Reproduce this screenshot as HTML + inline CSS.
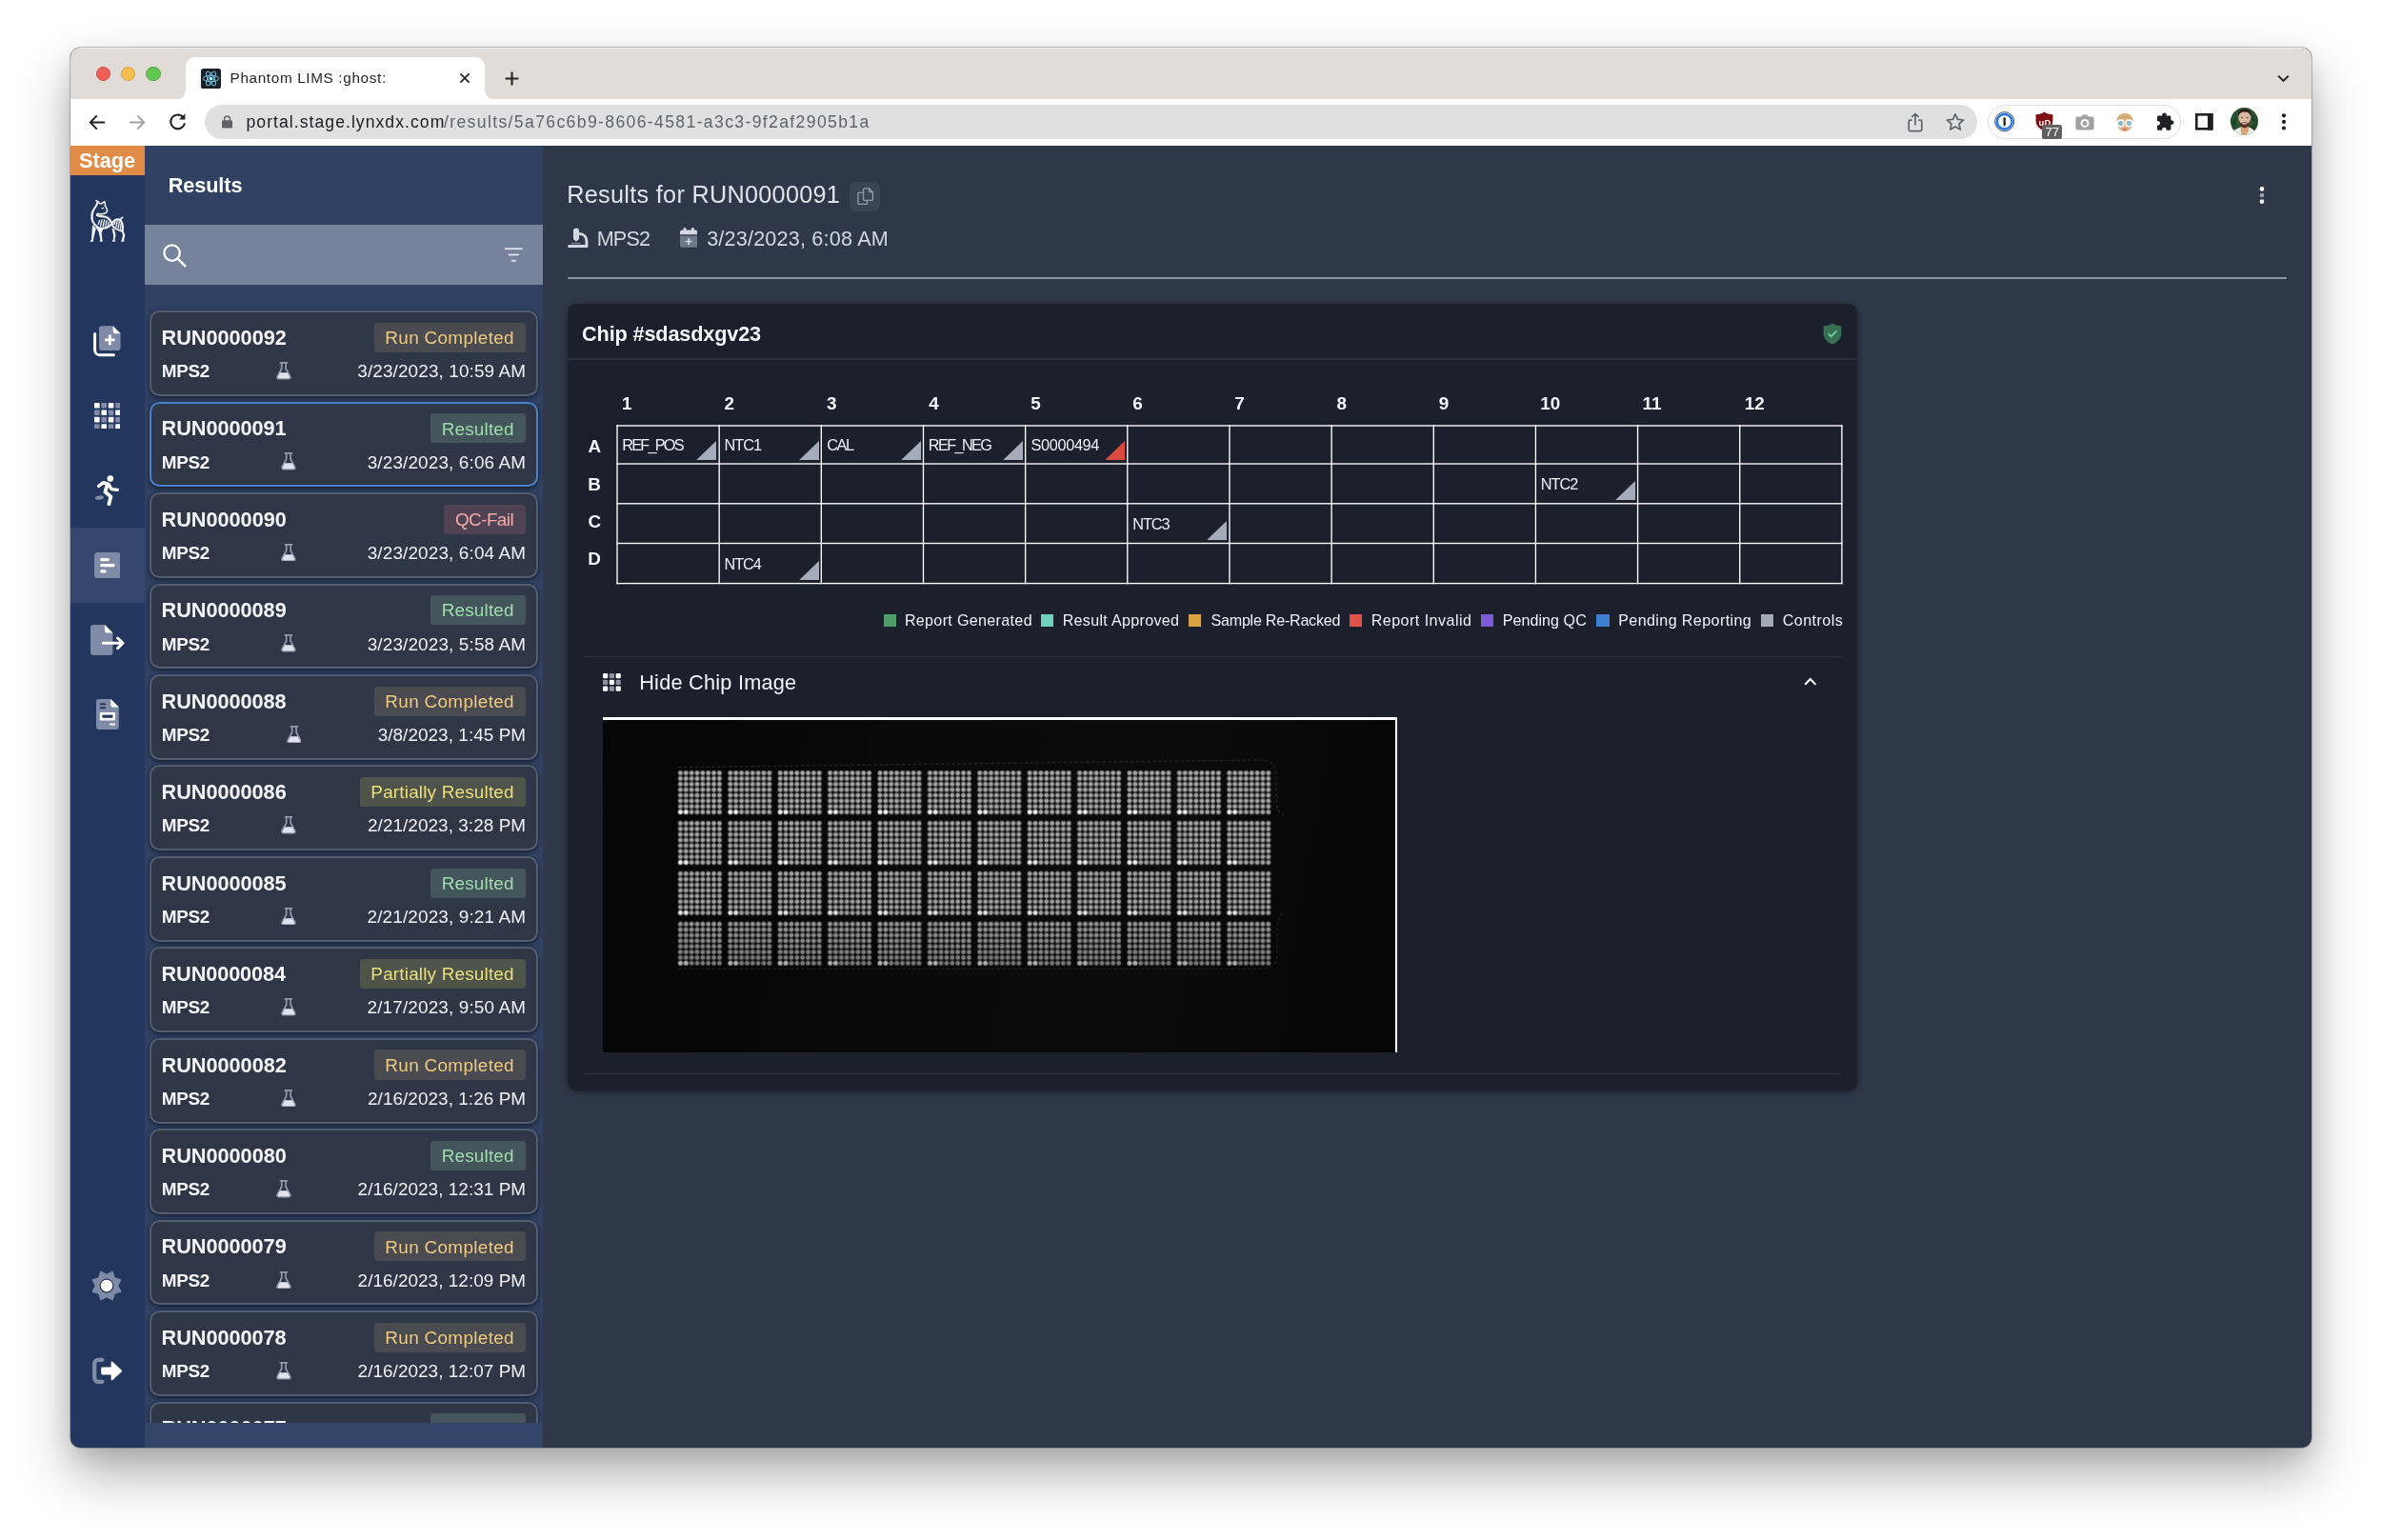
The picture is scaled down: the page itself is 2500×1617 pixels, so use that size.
<!DOCTYPE html>
<html lang="en"><head><meta charset="utf-8"><title>Phantom LIMS :ghost:</title>
<style>
html,body{margin:0;padding:0;background:#fff;}
body{width:2500px;height:1617px;position:relative;overflow:hidden;font-family:"Liberation Sans",sans-serif;}
.b{position:absolute;box-sizing:border-box;display:block;}
.t{position:absolute;white-space:nowrap;}
#win{position:absolute;left:74px;top:50px;width:2353px;height:1470.4px;border-radius:10.5px;overflow:hidden;background:#2f3848;}
#shadow{position:absolute;left:74px;top:50px;width:2353px;height:1470.4px;border-radius:10.5px;box-shadow:0 0 0 0.7px rgba(0,0,0,.32),0 27px 56px rgba(0,0,0,.32),0 8px 22px rgba(0,0,0,.09);}
#in{position:absolute;left:-74px;top:-50px;width:2500px;height:1617px;}
#in{will-change:transform;}
#clip{position:absolute;left:152px;top:300px;width:418px;height:1193.5px;overflow:hidden;}
#clipin{position:absolute;left:-152px;top:-300px;width:2500px;height:1617px;}
</style></head><body>
<div id="shadow"></div>
<div id="win"><div id="in">
<div class="b" style="left:73.00px;top:49.00px;width:2354.00px;height:55.20px;background:#e2dcd8;"></div>
<div class="b" style="left:74.00px;top:50.00px;width:2353.00px;height:1.20px;background:rgba(255,255,255,.55);"></div>
<div class="b" style="left:73.00px;top:104.20px;width:2354.00px;height:48.60px;background:#ffffff;"></div>
<div class="b" style="left:100.60px;top:69.70px;width:15.60px;height:15.60px;background:#ee5f57;border-radius:50%;border:0.6px solid #d24a42;"></div>
<div class="b" style="left:126.90px;top:69.70px;width:15.60px;height:15.60px;background:#f6be4f;border-radius:50%;border:0.6px solid #d8a03a;"></div>
<div class="b" style="left:153.00px;top:69.70px;width:15.60px;height:15.60px;background:#62c554;border-radius:50%;border:0.6px solid #4ea73e;"></div>
<svg class="b" style="left:183.00px;top:60.00px;" width="338.00" height="45.00" viewBox="0 0 338 45"><path d="M0 45 C7 45 12 41 12 33 V11 C12 4 16 0 23 0 H315 C322 0 326 4 326 11 V33 C326 41 331 45 338 45 Z" fill="#fff"/></svg>
<svg class="b" style="left:210.70px;top:71.70px;" width="21.00" height="21.00" viewBox="0 0 21 21"><rect width="21" height="21" rx="2.6" fill="#1d2027"/><g fill="none" stroke="#7ccbe8" stroke-width="0.95"><ellipse cx="10.5" cy="10.5" rx="8.3" ry="3.2"/><ellipse cx="10.5" cy="10.5" rx="8.3" ry="3.2" transform="rotate(60 10.5 10.5)"/><ellipse cx="10.5" cy="10.5" rx="8.3" ry="3.2" transform="rotate(120 10.5 10.5)"/></g><circle cx="10.5" cy="10.5" r="1.9" fill="#9eeeff"/></svg>
<div class="t" style="left:241.54px;top:74.25px;font-size:15.3px;line-height:15.3px;color:#1f2023;letter-spacing:0.646px;">Phantom LIMS :ghost:</div>
<svg class="b" style="left:481.90px;top:76.40px;" width="12.00" height="12.00" viewBox="0 0 12 12"><path d="M1.4 1.4 L10.6 10.6 M10.6 1.4 L1.4 10.6" stroke="#202124" stroke-width="1.7" fill="none"/></svg>
<svg class="b" style="left:529.70px;top:74.90px;" width="15.00" height="15.00" viewBox="0 0 15 15"><path d="M7.5 0.6 V14.4 M0.6 7.5 H14.4" stroke="#202124" stroke-width="2.1" fill="none"/></svg>
<svg class="b" style="left:2391.30px;top:78.40px;" width="13.00" height="9.00" viewBox="0 0 13 9"><path d="M1.2 1.6 L6.5 6.9 L11.8 1.6" stroke="#202124" stroke-width="2" fill="none"/></svg>
<svg class="b" style="left:93.00px;top:119.50px;" width="18.00" height="17.00" viewBox="0 0 18 17"><path d="M17 8.5 H2.2 M8.8 1.4 L1.8 8.5 L8.8 15.6" stroke="#1f2023" stroke-width="1.9" fill="none" stroke-linejoin="miter"/></svg>
<svg class="b" style="left:134.50px;top:119.50px;" width="18.00" height="17.00" viewBox="0 0 18 17"><path d="M1 8.5 H15.8 M9.2 1.4 L16.2 8.5 L9.2 15.6" stroke="#a3a3a3" stroke-width="1.9" fill="none"/></svg>
<svg class="b" style="left:176.50px;top:118.00px;" width="19.00" height="20.00" viewBox="0 0 19 20"><path d="M15.6 5.4 A7.4 7.4 0 1 0 16.9 11.4" stroke="#1f2023" stroke-width="2" fill="none"/><path d="M17.4 1.2 V7.6 H11 Z" fill="#1f2023"/></svg>
<div class="b" style="left:214.50px;top:110.10px;width:1861.40px;height:35.70px;background:#e0e0e0;border-radius:18px;"></div>
<svg class="b" style="left:232.60px;top:121.40px;" width="11.00" height="13.60" viewBox="0 0 11 13.6"><rect x="0" y="5.2" width="11" height="8.4" rx="1.4" fill="#5f6368"/><path d="M2.6 5.6 V3.9 a2.9 2.9 0 0 1 5.8 0 V5.6" stroke="#5f6368" stroke-width="1.5" fill="none"/></svg>
<div class="t" style="left:258.47px;top:120.40px;font-size:17.6px;line-height:17.6px;color:#202124;letter-spacing:1.046px;">portal.stage.lynxdx.com</div>
<div class="t" style="left:466.00px;top:120.40px;font-size:17.6px;line-height:17.6px;color:#606368;letter-spacing:1.361px;">/results/5a76c6b9-8606-4581-a3c3-9f2af2905b1a</div>
<svg class="b" style="left:2003.00px;top:117.50px;" width="16.00" height="21.00" viewBox="0 0 16 21"><path d="M4.6 8.2 H2.8 a1.6 1.6 0 0 0 -1.6 1.6 V18 a1.6 1.6 0 0 0 1.6 1.6 H13.2 a1.6 1.6 0 0 0 1.6 -1.6 V9.8 a1.6 1.6 0 0 0 -1.6 -1.6 H11.4" stroke="#5f6368" stroke-width="1.7" fill="none"/><path d="M8 13.4 V1.6 M4.3 5 L8 1.4 L11.7 5" stroke="#5f6368" stroke-width="1.7" fill="none"/></svg>
<svg class="b" style="left:2042.80px;top:117.60px;" width="20.00" height="20.00" viewBox="0 0 20 20"><path d="M10 1.8 L12.5 7.4 L18.6 8 L14 12.1 L15.3 18.1 L10 15 L4.7 18.1 L6 12.1 L1.4 8 L7.5 7.4 Z" stroke="#5f6368" stroke-width="1.7" fill="none" stroke-linejoin="round"/></svg>
<div class="b" style="left:2087.00px;top:110.10px;width:203.30px;height:35.70px;background:#fff;border-radius:18px;border:1px solid #dadce0;"></div>
<svg class="b" style="left:2094.20px;top:117.40px;" width="21.40" height="21.40" viewBox="0 0 21.4 21.4"><circle cx="10.7" cy="10.7" r="10.1" fill="#fff" stroke="#3b3d42" stroke-width="0.9"/><circle cx="10.7" cy="10.7" r="7.9" fill="#fff" stroke="#2b7be6" stroke-width="2.7"/><rect x="9.6" y="6.2" width="2.2" height="9" rx="1" fill="#17181a"/></svg>
<svg class="b" style="left:2137.40px;top:117.20px;" width="19.00" height="21.00" viewBox="0 0 19 21"><path d="M9.5 0.6 C12 2.6 15 3.2 18.4 3.2 V9.5 C18.4 15 14.6 18.6 9.5 20.4 C4.4 18.6 0.6 15 0.6 9.5 V3.2 C4 3.2 7 2.6 9.5 0.6 Z" fill="#800f12"/></svg>
<div class="t" style="left:2140.61px;top:123.96px;font-size:9.5px;line-height:9.5px;color:#fff;font-weight:700;">uD</div>
<div class="b" style="left:2144.40px;top:130.70px;width:20.80px;height:15.10px;background:#616161;border-radius:2.6px;"></div>
<div class="t" style="left:2147.45px;top:131.83px;font-size:13.2px;line-height:13.2px;color:#fff;">77</div>
<svg class="b" style="left:2178.80px;top:119.60px;" width="20.00" height="17.00" viewBox="0 0 20 17"><path d="M6.4 2.4 L7.6 0.4 H12.4 L13.6 2.4 H17.8 a1.8 1.8 0 0 1 1.8 1.8 V14.8 a1.8 1.8 0 0 1 -1.8 1.8 H2.2 a1.8 1.8 0 0 1 -1.8 -1.8 V4.2 a1.8 1.8 0 0 1 1.8 -1.8 Z" fill="#a2a2a2"/><circle cx="10" cy="9.4" r="4.4" fill="#fff"/><circle cx="10" cy="9.4" r="2.5" fill="#a2a2a2"/></svg>
<svg class="b" style="left:2219.80px;top:117.60px;" width="22.00" height="22.00" viewBox="0 0 22 22"><ellipse cx="11" cy="8.2" rx="8.6" ry="7.4" fill="#d8b27a"/><ellipse cx="11" cy="12.4" rx="7.6" ry="8" fill="#e3b08c"/><path d="M3 8 C5 2.6 17 2.6 19 8 C15 5.8 7 5.8 3 8Z" fill="#cfa666"/><circle cx="6.6" cy="11.4" r="3.3" fill="#8dbccb" stroke="#fff" stroke-width="1.5"/><circle cx="15.4" cy="11.4" r="3.3" fill="#8dbccb" stroke="#fff" stroke-width="1.5"/><path d="M8.6 17.4 Q11 18.8 13.4 17.4" stroke="#a5564a" stroke-width="1" fill="none"/></svg>
<svg class="b" style="left:2262.60px;top:118.00px;" width="20.00" height="20.00" viewBox="0 0 20 20"><path d="M7.2 3.6 a2.4 2.4 0 1 1 4.6 0 H15 a1.4 1.4 0 0 1 1.4 1.4 V8.4 a2.4 2.4 0 1 1 0 4.6 V17.4 a1.4 1.4 0 0 1 -1.4 1.4 H11.6 a2.3 2.3 0 1 0 -4.4 0 H3.4 A1.4 1.4 0 0 1 2 17.4 V13.6 a2.3 2.3 0 1 0 0 -4.4 V5 a1.4 1.4 0 0 1 1.4 -1.4 Z" fill="#202124"/></svg>
<svg class="b" style="left:2305.00px;top:119.20px;" width="18.60" height="17.60" viewBox="0 0 18.6 17.6"><rect x="1.3" y="1.3" width="16" height="15" fill="#fff" stroke="#1f2023" stroke-width="2.6"/><rect x="13" y="0" width="5.6" height="17.6" fill="#1f2023"/></svg>
<svg class="b" style="left:2341.70px;top:113.20px;" width="29.00" height="29.00" viewBox="0 0 29 29"><defs><clipPath id="avc"><circle cx="14.5" cy="14.5" r="14.5"/></clipPath><radialGradient id="avg" cx="0.5" cy="0.45" r="0.6"><stop offset="0" stop-color="#3a6b40"/><stop offset="1" stop-color="#1e4226"/></radialGradient></defs><g clip-path="url(#avc)"><rect width="29" height="29" fill="url(#avg)"/><path d="M2 16 L7 9 L5 20 Z M24 7 L27 15 L22 13 Z M20 20 L26 24 L25 17 Z" fill="#173a20" opacity=".7"/><path d="M3.5 24 C7 21.5 10 20.6 11.5 20.4 L15 27 L18.6 20.4 C21 21 23.6 22.4 25.6 24.6 L24 30 H5 Z" fill="#ecebe7"/><path d="M11.2 19.5 L18.4 19.5 L19.4 24 L15.6 30 L12 30 L10.4 23 Z" fill="#d7a47c"/><ellipse cx="14.8" cy="10.6" rx="6.5" ry="7.6" fill="#dcb8a0"/><path d="M8 9.6 C7.6 4.4 10.6 1.6 14.8 1.6 C19.4 1.6 22 4.6 21.4 9.4 C20.6 6.4 18.6 4.6 14.8 4.6 C11 4.6 8.8 6.4 8 9.6 Z" fill="#2b1c15"/><path d="M8.6 12.6 C9.2 15.4 10 16.6 11.4 16 C13.4 15 16.2 15 18.2 16 C19.6 16.6 20.4 15.2 20.9 12.6 C21.2 17.4 18.6 21.4 14.8 21.4 C11 21.4 8.4 17.4 8.6 12.6 Z" fill="#5a3526"/><path d="M12.2 16.4 Q14.8 18.2 17.4 16.4 Q14.8 17.2 12.2 16.4 Z" fill="#f4f0ea" stroke="#f4f0ea" stroke-width=".5"/><path d="M11 10.4 H13 M16.6 10.4 H18.6" stroke="#4a3428" stroke-width=".9"/></g></svg>
<svg class="b" style="left:2394.00px;top:118.00px;" width="8.00" height="20.00" viewBox="0 0 8 20"><circle cx="4" cy="3.3" r="2.1" fill="#202124"/><circle cx="4" cy="9.9" r="2.1" fill="#202124"/><circle cx="4" cy="16.5" r="2.1" fill="#202124"/></svg>
<div class="b" style="left:73.00px;top:152.70px;width:79.00px;height:1368.00px;background:#23365d;"></div>
<div class="b" style="left:152.00px;top:152.70px;width:418.00px;height:1368.00px;background:#304163;"></div>
<div class="b" style="left:570.00px;top:152.70px;width:1857.00px;height:1368.00px;background:#2f3848;"></div>
<div class="b" style="left:73.00px;top:152.70px;width:79.00px;height:31.30px;background:#e08b46;"></div>
<div class="t" style="left:83.07px;top:157.63px;font-size:21.7px;line-height:21.7px;color:#fff;font-weight:700;letter-spacing:-0.032px;">Stage</div>
<div class="b" style="left:73.00px;top:554.00px;width:79.00px;height:78.50px;background:#34466b;"></div>
<svg class="b" style="left:88.00px;top:204.00px;" width="50.00" height="56.00" viewBox="0 0 50 56"><g fill="none" stroke="#f1f4f9" stroke-linecap="round" stroke-linejoin="round"><path stroke-width="1.5" d="M12.8 6.5 C14.6 7 15.8 8.2 16.6 9.6 L18.2 10 L21.8 7.7 C22.4 9 22.5 10.4 22.3 11.6 C23.4 13.4 24.2 15.2 24.7 17.1 C24.2 19 22.8 20.2 20.6 20.6 C18.4 21 16.4 20.8 14.6 20.2 L13.6 21.7"/><path stroke-width="1.2" d="M19 14.9 L20.7 14.2"/><path stroke-width="2.1" d="M14.4 8.6 C14 11.4 11.6 14 10.1 16.6 C8.5 19.6 8 23 8.7 26.6 C9.5 30.2 12 33 15.5 35.2"/><path stroke-width="2.1" d="M13.8 21.8 C16.2 23.5 20 22.7 23.5 24 C27.5 25.6 29 29 30.2 32.5 C31.5 36 36 37.6 40.5 38.6"/><path stroke-width="2.1" d="M15.5 35.2 C19 36 24 35.6 27 33.4 C30 31.2 30.5 28 33.5 26.8 C36.5 25.8 39.2 27.4 40.4 31 C41.2 33.4 41.2 36 40.5 38.6"/><path stroke-width="1.7" d="M37.6 27.2 L40.6 24.3"/><path stroke-width="1.35" d="M16.5 27.4 L15.3 31.4 M19 27 L17.6 33 M21.6 27 L20.2 33.6 M24.1 27.6 L22.8 33.4 M26.3 29.2 L25.5 32.4 M32.9 28.8 L32.1 31.6 M35.1 28 L34 34.2 M37.3 28.8 L36.2 35.4 M39.3 30.6 L38.5 36"/></g><g fill="#f1f4f9"><path d="M9.1 32.2 L12.8 35.6 L10 47.4 L9.8 49.7 H6.3 L8 47.5 Z"/><path d="M12.4 34.6 L20.6 36 L18.6 40 L19.4 47.5 L19.9 49.7 H16.7 L17.3 47.5 L15.6 39.6 Z"/><path d="M29.4 35.6 L32.2 37 L33.5 43.2 L32.5 47.5 L32.9 49.7 H29.9 L30.7 47.5 L31.2 43.4 Z"/><path d="M39.4 38 L41.4 38.2 L43.3 42.8 L42.3 47.5 L42.1 49.7 H39.1 L39.9 47.5 L41 43 Z"/></g></svg>
<svg class="b" style="left:98.00px;top:341.50px;" width="29.00" height="33.00" viewBox="0 0 29 33"><path d="M9 0.3 H20.6 L28.6 8.3 V23 a3 3 0 0 1 -3 3 H9 a3 3 0 0 1 -3 -3 V3.3 a3 3 0 0 1 3 -3 Z" fill="#7f8ba7"/><path d="M20.6 0.3 L28.6 8.3 H22.6 a2 2 0 0 1 -2 -2 Z" fill="#fff"/><path d="M15.9 9.6 h2.8 v3.9 h3.9 v2.8 h-3.9 v3.9 h-2.8 v-3.9 h-3.9 v-2.8 h3.9 Z" fill="#fff"/><path d="M1.6 8.4 V25.4 a5.4 5.4 0 0 0 5.4 5.4 H21.4" stroke="#fff" stroke-width="3" fill="none" stroke-linecap="round"/></svg>
<svg class="b" style="left:98.60px;top:422.60px;" width="27.80" height="27.80" viewBox="0 0 27.8 27.8"><rect x="0.0" y="0.0" width="5.6" height="5.6" rx="0.7" fill="#fff"/><rect x="7.4" y="0.0" width="5.6" height="5.6" rx="0.7" fill="#7f8ba7"/><rect x="14.8" y="0.0" width="5.6" height="5.6" rx="0.7" fill="#fff"/><rect x="22.2" y="0.0" width="5.6" height="5.6" rx="0.7" fill="#7f8ba7"/><rect x="0.0" y="7.4" width="5.6" height="5.6" rx="0.7" fill="#7f8ba7"/><rect x="7.4" y="7.4" width="5.6" height="5.6" rx="0.7" fill="#fff"/><rect x="14.8" y="7.4" width="5.6" height="5.6" rx="0.7" fill="#7f8ba7"/><rect x="22.2" y="7.4" width="5.6" height="5.6" rx="0.7" fill="#fff"/><rect x="0.0" y="14.8" width="5.6" height="5.6" rx="0.7" fill="#fff"/><rect x="7.4" y="14.8" width="5.6" height="5.6" rx="0.7" fill="#7f8ba7"/><rect x="14.8" y="14.8" width="5.6" height="5.6" rx="0.7" fill="#fff"/><rect x="22.2" y="14.8" width="5.6" height="5.6" rx="0.7" fill="#7f8ba7"/><rect x="0.0" y="22.2" width="5.6" height="5.6" rx="0.7" fill="#7f8ba7"/><rect x="7.4" y="22.2" width="5.6" height="5.6" rx="0.7" fill="#fff"/><rect x="14.8" y="22.2" width="5.6" height="5.6" rx="0.7" fill="#7f8ba7"/><rect x="22.2" y="22.2" width="5.6" height="5.6" rx="0.7" fill="#fff"/></svg>
<svg class="b" style="left:99.00px;top:498.60px;" width="27.00" height="32.40" viewBox="0 0 27 32.4"><circle cx="16.8" cy="3.6" r="3.3" fill="#fff"/><path d="M4.6 11.4 L9.6 7.6 L15 9.4 L18 14.6 L24.4 15.4" stroke="#fff" stroke-width="3.4" fill="none" stroke-linecap="round" stroke-linejoin="round"/><path d="M13.6 9.8 L11.4 17.6 L17.4 22.4 L15.4 30.4" stroke="#fff" stroke-width="3.8" fill="none" stroke-linecap="round" stroke-linejoin="round"/><ellipse cx="5.4" cy="23.6" rx="4.6" ry="2.1" fill="#7f8ba7" transform="rotate(-8 5.4 23.6)"/></svg>
<svg class="b" style="left:98.60px;top:579.60px;" width="27.80" height="27.40" viewBox="0 0 27.8 27.4"><rect width="27.8" height="27.4" rx="4" fill="#7f8ba7"/><g stroke="#fff" stroke-width="3.3" stroke-linecap="round"><path d="M7.8 7.7 H14.2"/><path d="M7.8 13.7 H20"/><path d="M7.8 19.9 H11"/></g></svg>
<svg class="b" style="left:94.60px;top:656.00px;" width="36.00" height="32.00" viewBox="0 0 36 32"><path d="M3 0 H15 L23.4 8.4 V29 a3 3 0 0 1 -3 3 H3 a3 3 0 0 1 -3 -3 V3 a3 3 0 0 1 3 -3 Z" fill="#7f8ba7"/><path d="M15 0 L23.4 8.4 H17 a2 2 0 0 1 -2 -2 Z" fill="#fff"/><path d="M13.4 19.3 H33 M28.6 14 L34 19.3 L28.6 24.6" stroke="#fff" stroke-width="3" fill="none" stroke-linecap="round" stroke-linejoin="round"/></svg>
<svg class="b" style="left:100.60px;top:734.20px;" width="24.00" height="32.00" viewBox="0 0 24 32"><path d="M3 0 H15.4 L23.8 8.4 V29 a3 3 0 0 1 -3 3 H3 a3 3 0 0 1 -3 -3 V3 a3 3 0 0 1 3 -3 Z" fill="#7f8ba7"/><path d="M15.4 0 L23.8 8.4 H17.4 a2 2 0 0 1 -2 -2 Z" fill="#fff"/><rect x="3.8" y="4.4" width="6.2" height="1.9" fill="#23365d"/><rect x="3.8" y="8.3" width="6.2" height="1.9" fill="#23365d"/><rect x="3.8" y="14" width="16.2" height="8.4" rx="1" fill="#fff"/><rect x="6.4" y="16.6" width="11" height="3.2" fill="#23365d"/><rect x="14" y="25.6" width="6" height="1.9" fill="#fff"/></svg>
<svg class="b" style="left:95.20px;top:1333.20px;" width="34.00" height="34.00" viewBox="0 0 34 34"><polygon points="23.24,1.94 25.34,8.66 32.06,10.76 28.80,17.00 32.06,23.24 25.34,25.34 23.24,32.06 17.00,28.80 10.76,32.06 8.66,25.34 1.94,23.24 5.20,17.00 1.94,10.76 8.66,8.66 10.76,1.94 17.00,5.20" fill="#7f8ba7" stroke="#7f8ba7" stroke-width="1" stroke-linejoin="round"/><circle cx="17" cy="17" r="7.4" fill="#23365d"/><circle cx="17" cy="17" r="6.2" fill="#fff"/></svg>
<svg class="b" style="left:96.00px;top:1425.00px;" width="34.00" height="29.00" viewBox="0 0 34 29"><path d="M11.4 2.8 H7 a3.8 3.8 0 0 0 -3.8 3.8 V22 a3.8 3.8 0 0 0 3.8 3.8 H11.4" stroke="#7f8ba7" stroke-width="4.2" fill="none" stroke-linecap="round"/><path d="M11.6 10.6 H20.6 V5.4 a0.9 0.9 0 0 1 1.5 -0.7 L31.6 13.6 a1.2 1.2 0 0 1 0 1.8 L22.1 24.2 a0.9 0.9 0 0 1 -1.5 -0.7 V18.4 H11.6 a1.4 1.4 0 0 1 -1.4 -1.4 V12 a1.4 1.4 0 0 1 1.4 -1.4 Z" fill="#fff"/></svg>
<div class="t" style="left:176.75px;top:183.63px;font-size:21.7px;line-height:21.7px;color:#fff;font-weight:700;letter-spacing:-0.108px;">Results</div>
<div class="b" style="left:152.00px;top:236.20px;width:418.00px;height:62.60px;background:#76839b;"></div>
<svg class="b" style="left:169.00px;top:253.60px;" width="28.00" height="28.00" viewBox="0 0 28 28"><circle cx="11.6" cy="11.6" r="8.2" stroke="#fff" stroke-width="2.3" fill="none"/><path d="M17.6 17.6 L25.2 25.2" stroke="#fff" stroke-width="2.6" stroke-linecap="round"/></svg>
<svg class="b" style="left:529.60px;top:260.00px;" width="19.00" height="15.00" viewBox="0 0 19 15"><g stroke="#e4e8ef" stroke-width="1.7"><path d="M0 1.2 H18.6"/><path d="M3.8 7.5 H14.8"/><path d="M6.8 13.8 H11.8"/></g></svg>
<div id="clip"><div id="clipin">
<div class="b" style="left:157.00px;top:326.20px;width:407.60px;height:89.80px;background:#2f3747;border:2px solid #535d71;border-radius:10.5px;box-shadow:0 2px 5px rgba(0,0,0,.5),0 0 2px rgba(0,0,0,.3);"></div>
<div class="t" style="left:169.55px;top:343.93px;font-size:21.7px;line-height:21.7px;color:#f4f6fa;font-weight:700;letter-spacing:-0.020px;">RUN0000092</div>
<div class="b" style="left:392.90px;top:338.80px;width:159.10px;height:31.20px;background:#4a4b50;border-radius:3.5px;"></div>
<div class="t" style="left:404.35px;top:346.10px;font-size:18.9px;line-height:18.9px;color:#efc97f;letter-spacing:0.329px;">Run Completed</div>
<div class="t" style="left:169.74px;top:381.20px;font-size:18.9px;line-height:18.9px;color:#f4f6fa;font-weight:700;letter-spacing:-0.316px;">MPS2</div>
<div class="t" style="left:375.29px;top:381.20px;font-size:18.9px;line-height:18.9px;color:#eef1f6;letter-spacing:0.135px;">3/23/2023, 10:59 AM</div>
<svg class="b" style="left:289.85px;top:380.00px;" width="15.80" height="18.60" viewBox="0 0 15.8 18.6"><path d="M4.4 0.9 H11.4 M5.7 1 V7 L1.2 15.4 a1.5 1.5 0 0 0 1.3 2.3 H13.3 a1.5 1.5 0 0 0 1.3 -2.3 L10.1 7 V1" stroke="#9099ad" stroke-width="1.7" fill="none" stroke-linejoin="round" stroke-linecap="round"/><path d="M4 11.2 H11.8 L14 15.6 a1.2 1.2 0 0 1 -1 1.7 H2.8 a1.2 1.2 0 0 1 -1 -1.7 Z" fill="#dfe3ea"/></svg>
<div class="b" style="left:157.00px;top:421.65px;width:407.60px;height:89.80px;background:#2f3747;border:2.4px solid #4981cd;border-radius:10.5px;box-shadow:0 2px 5px rgba(0,0,0,.5),0 0 2px rgba(0,0,0,.3);"></div>
<div class="t" style="left:169.55px;top:439.38px;font-size:21.7px;line-height:21.7px;color:#f4f6fa;font-weight:700;letter-spacing:-0.049px;">RUN0000091</div>
<div class="b" style="left:452.20px;top:434.25px;width:99.80px;height:31.20px;background:#44565c;border-radius:3.5px;"></div>
<div class="t" style="left:463.65px;top:441.55px;font-size:18.9px;line-height:18.9px;color:#9fdcae;letter-spacing:0.196px;">Resulted</div>
<div class="t" style="left:169.74px;top:476.65px;font-size:18.9px;line-height:18.9px;color:#f4f6fa;font-weight:700;letter-spacing:-0.316px;">MPS2</div>
<div class="t" style="left:385.70px;top:476.65px;font-size:18.9px;line-height:18.9px;color:#eef1f6;letter-spacing:0.148px;">3/23/2023, 6:06 AM</div>
<svg class="b" style="left:295.06px;top:475.45px;" width="15.80" height="18.60" viewBox="0 0 15.8 18.6"><path d="M4.4 0.9 H11.4 M5.7 1 V7 L1.2 15.4 a1.5 1.5 0 0 0 1.3 2.3 H13.3 a1.5 1.5 0 0 0 1.3 -2.3 L10.1 7 V1" stroke="#9099ad" stroke-width="1.7" fill="none" stroke-linejoin="round" stroke-linecap="round"/><path d="M4 11.2 H11.8 L14 15.6 a1.2 1.2 0 0 1 -1 1.7 H2.8 a1.2 1.2 0 0 1 -1 -1.7 Z" fill="#dfe3ea"/></svg>
<div class="b" style="left:157.00px;top:517.10px;width:407.60px;height:89.80px;background:#2f3747;border:2px solid #535d71;border-radius:10.5px;box-shadow:0 2px 5px rgba(0,0,0,.5),0 0 2px rgba(0,0,0,.3);"></div>
<div class="t" style="left:169.55px;top:534.83px;font-size:21.7px;line-height:21.7px;color:#f4f6fa;font-weight:700;letter-spacing:-0.017px;">RUN0000090</div>
<div class="b" style="left:465.90px;top:529.70px;width:86.10px;height:31.20px;background:#4f4353;border-radius:3.5px;"></div>
<div class="t" style="left:478.00px;top:537.00px;font-size:18.9px;line-height:18.9px;color:#f3a9a4;letter-spacing:-0.573px;">QC-Fail</div>
<div class="t" style="left:169.74px;top:572.10px;font-size:18.9px;line-height:18.9px;color:#f4f6fa;font-weight:700;letter-spacing:-0.316px;">MPS2</div>
<div class="t" style="left:385.70px;top:572.10px;font-size:18.9px;line-height:18.9px;color:#eef1f6;letter-spacing:0.148px;">3/23/2023, 6:04 AM</div>
<svg class="b" style="left:295.06px;top:570.90px;" width="15.80" height="18.60" viewBox="0 0 15.8 18.6"><path d="M4.4 0.9 H11.4 M5.7 1 V7 L1.2 15.4 a1.5 1.5 0 0 0 1.3 2.3 H13.3 a1.5 1.5 0 0 0 1.3 -2.3 L10.1 7 V1" stroke="#9099ad" stroke-width="1.7" fill="none" stroke-linejoin="round" stroke-linecap="round"/><path d="M4 11.2 H11.8 L14 15.6 a1.2 1.2 0 0 1 -1 1.7 H2.8 a1.2 1.2 0 0 1 -1 -1.7 Z" fill="#dfe3ea"/></svg>
<div class="b" style="left:157.00px;top:612.55px;width:407.60px;height:89.80px;background:#2f3747;border:2px solid #535d71;border-radius:10.5px;box-shadow:0 2px 5px rgba(0,0,0,.5),0 0 2px rgba(0,0,0,.3);"></div>
<div class="t" style="left:169.55px;top:630.28px;font-size:21.7px;line-height:21.7px;color:#f4f6fa;font-weight:700;letter-spacing:-0.027px;">RUN0000089</div>
<div class="b" style="left:452.20px;top:625.15px;width:99.80px;height:31.20px;background:#44565c;border-radius:3.5px;"></div>
<div class="t" style="left:463.65px;top:632.45px;font-size:18.9px;line-height:18.9px;color:#9fdcae;letter-spacing:0.196px;">Resulted</div>
<div class="t" style="left:169.74px;top:667.55px;font-size:18.9px;line-height:18.9px;color:#f4f6fa;font-weight:700;letter-spacing:-0.316px;">MPS2</div>
<div class="t" style="left:385.70px;top:667.55px;font-size:18.9px;line-height:18.9px;color:#eef1f6;letter-spacing:0.148px;">3/23/2023, 5:58 AM</div>
<svg class="b" style="left:295.06px;top:666.35px;" width="15.80" height="18.60" viewBox="0 0 15.8 18.6"><path d="M4.4 0.9 H11.4 M5.7 1 V7 L1.2 15.4 a1.5 1.5 0 0 0 1.3 2.3 H13.3 a1.5 1.5 0 0 0 1.3 -2.3 L10.1 7 V1" stroke="#9099ad" stroke-width="1.7" fill="none" stroke-linejoin="round" stroke-linecap="round"/><path d="M4 11.2 H11.8 L14 15.6 a1.2 1.2 0 0 1 -1 1.7 H2.8 a1.2 1.2 0 0 1 -1 -1.7 Z" fill="#dfe3ea"/></svg>
<div class="b" style="left:157.00px;top:708.00px;width:407.60px;height:89.80px;background:#2f3747;border:2px solid #535d71;border-radius:10.5px;box-shadow:0 2px 5px rgba(0,0,0,.5),0 0 2px rgba(0,0,0,.3);"></div>
<div class="t" style="left:169.55px;top:725.73px;font-size:21.7px;line-height:21.7px;color:#f4f6fa;font-weight:700;letter-spacing:-0.042px;">RUN0000088</div>
<div class="b" style="left:392.90px;top:720.60px;width:159.10px;height:31.20px;background:#4a4b50;border-radius:3.5px;"></div>
<div class="t" style="left:404.35px;top:727.90px;font-size:18.9px;line-height:18.9px;color:#efc97f;letter-spacing:0.329px;">Run Completed</div>
<div class="t" style="left:169.74px;top:763.00px;font-size:18.9px;line-height:18.9px;color:#f4f6fa;font-weight:700;letter-spacing:-0.316px;">MPS2</div>
<div class="t" style="left:396.65px;top:763.00px;font-size:18.9px;line-height:18.9px;color:#eef1f6;letter-spacing:0.065px;">3/8/2023, 1:45 PM</div>
<svg class="b" style="left:300.54px;top:761.80px;" width="15.80" height="18.60" viewBox="0 0 15.8 18.6"><path d="M4.4 0.9 H11.4 M5.7 1 V7 L1.2 15.4 a1.5 1.5 0 0 0 1.3 2.3 H13.3 a1.5 1.5 0 0 0 1.3 -2.3 L10.1 7 V1" stroke="#9099ad" stroke-width="1.7" fill="none" stroke-linejoin="round" stroke-linecap="round"/><path d="M4 11.2 H11.8 L14 15.6 a1.2 1.2 0 0 1 -1 1.7 H2.8 a1.2 1.2 0 0 1 -1 -1.7 Z" fill="#dfe3ea"/></svg>
<div class="b" style="left:157.00px;top:803.45px;width:407.60px;height:89.80px;background:#2f3747;border:2px solid #535d71;border-radius:10.5px;box-shadow:0 2px 5px rgba(0,0,0,.5),0 0 2px rgba(0,0,0,.3);"></div>
<div class="t" style="left:169.55px;top:821.18px;font-size:21.7px;line-height:21.7px;color:#f4f6fa;font-weight:700;letter-spacing:-0.029px;">RUN0000086</div>
<div class="b" style="left:377.90px;top:816.05px;width:174.10px;height:31.20px;background:#4e5449;border-radius:3.5px;"></div>
<div class="t" style="left:389.35px;top:823.35px;font-size:18.9px;line-height:18.9px;color:#ecdf7d;letter-spacing:0.188px;">Partially Resulted</div>
<div class="t" style="left:169.74px;top:858.45px;font-size:18.9px;line-height:18.9px;color:#f4f6fa;font-weight:700;letter-spacing:-0.316px;">MPS2</div>
<div class="t" style="left:386.01px;top:858.45px;font-size:18.9px;line-height:18.9px;color:#eef1f6;letter-spacing:0.069px;">2/21/2023, 3:28 PM</div>
<svg class="b" style="left:295.33px;top:857.25px;" width="15.80" height="18.60" viewBox="0 0 15.8 18.6"><path d="M4.4 0.9 H11.4 M5.7 1 V7 L1.2 15.4 a1.5 1.5 0 0 0 1.3 2.3 H13.3 a1.5 1.5 0 0 0 1.3 -2.3 L10.1 7 V1" stroke="#9099ad" stroke-width="1.7" fill="none" stroke-linejoin="round" stroke-linecap="round"/><path d="M4 11.2 H11.8 L14 15.6 a1.2 1.2 0 0 1 -1 1.7 H2.8 a1.2 1.2 0 0 1 -1 -1.7 Z" fill="#dfe3ea"/></svg>
<div class="b" style="left:157.00px;top:898.90px;width:407.60px;height:89.80px;background:#2f3747;border:2px solid #535d71;border-radius:10.5px;box-shadow:0 2px 5px rgba(0,0,0,.5),0 0 2px rgba(0,0,0,.3);"></div>
<div class="t" style="left:169.55px;top:916.63px;font-size:21.7px;line-height:21.7px;color:#f4f6fa;font-weight:700;letter-spacing:-0.049px;">RUN0000085</div>
<div class="b" style="left:452.20px;top:911.50px;width:99.80px;height:31.20px;background:#44565c;border-radius:3.5px;"></div>
<div class="t" style="left:463.65px;top:918.80px;font-size:18.9px;line-height:18.9px;color:#9fdcae;letter-spacing:0.196px;">Resulted</div>
<div class="t" style="left:169.74px;top:953.90px;font-size:18.9px;line-height:18.9px;color:#f4f6fa;font-weight:700;letter-spacing:-0.316px;">MPS2</div>
<div class="t" style="left:385.47px;top:953.90px;font-size:18.9px;line-height:18.9px;color:#eef1f6;letter-spacing:0.162px;">2/21/2023, 9:21 AM</div>
<svg class="b" style="left:295.06px;top:952.70px;" width="15.80" height="18.60" viewBox="0 0 15.8 18.6"><path d="M4.4 0.9 H11.4 M5.7 1 V7 L1.2 15.4 a1.5 1.5 0 0 0 1.3 2.3 H13.3 a1.5 1.5 0 0 0 1.3 -2.3 L10.1 7 V1" stroke="#9099ad" stroke-width="1.7" fill="none" stroke-linejoin="round" stroke-linecap="round"/><path d="M4 11.2 H11.8 L14 15.6 a1.2 1.2 0 0 1 -1 1.7 H2.8 a1.2 1.2 0 0 1 -1 -1.7 Z" fill="#dfe3ea"/></svg>
<div class="b" style="left:157.00px;top:994.35px;width:407.60px;height:89.80px;background:#2f3747;border:2px solid #535d71;border-radius:10.5px;box-shadow:0 2px 5px rgba(0,0,0,.5),0 0 2px rgba(0,0,0,.3);"></div>
<div class="t" style="left:169.55px;top:1012.08px;font-size:21.7px;line-height:21.7px;color:#f4f6fa;font-weight:700;letter-spacing:-0.103px;">RUN0000084</div>
<div class="b" style="left:377.90px;top:1006.95px;width:174.10px;height:31.20px;background:#4e5449;border-radius:3.5px;"></div>
<div class="t" style="left:389.35px;top:1014.25px;font-size:18.9px;line-height:18.9px;color:#ecdf7d;letter-spacing:0.188px;">Partially Resulted</div>
<div class="t" style="left:169.74px;top:1049.35px;font-size:18.9px;line-height:18.9px;color:#f4f6fa;font-weight:700;letter-spacing:-0.316px;">MPS2</div>
<div class="t" style="left:385.47px;top:1049.35px;font-size:18.9px;line-height:18.9px;color:#eef1f6;letter-spacing:0.162px;">2/17/2023, 9:50 AM</div>
<svg class="b" style="left:295.06px;top:1048.15px;" width="15.80" height="18.60" viewBox="0 0 15.8 18.6"><path d="M4.4 0.9 H11.4 M5.7 1 V7 L1.2 15.4 a1.5 1.5 0 0 0 1.3 2.3 H13.3 a1.5 1.5 0 0 0 1.3 -2.3 L10.1 7 V1" stroke="#9099ad" stroke-width="1.7" fill="none" stroke-linejoin="round" stroke-linecap="round"/><path d="M4 11.2 H11.8 L14 15.6 a1.2 1.2 0 0 1 -1 1.7 H2.8 a1.2 1.2 0 0 1 -1 -1.7 Z" fill="#dfe3ea"/></svg>
<div class="b" style="left:157.00px;top:1089.80px;width:407.60px;height:89.80px;background:#2f3747;border:2px solid #535d71;border-radius:10.5px;box-shadow:0 2px 5px rgba(0,0,0,.5),0 0 2px rgba(0,0,0,.3);"></div>
<div class="t" style="left:169.55px;top:1107.53px;font-size:21.7px;line-height:21.7px;color:#f4f6fa;font-weight:700;letter-spacing:-0.020px;">RUN0000082</div>
<div class="b" style="left:392.90px;top:1102.40px;width:159.10px;height:31.20px;background:#4a4b50;border-radius:3.5px;"></div>
<div class="t" style="left:404.35px;top:1109.70px;font-size:18.9px;line-height:18.9px;color:#efc97f;letter-spacing:0.329px;">Run Completed</div>
<div class="t" style="left:169.74px;top:1144.80px;font-size:18.9px;line-height:18.9px;color:#f4f6fa;font-weight:700;letter-spacing:-0.316px;">MPS2</div>
<div class="t" style="left:386.01px;top:1144.80px;font-size:18.9px;line-height:18.9px;color:#eef1f6;letter-spacing:0.069px;">2/16/2023, 1:26 PM</div>
<svg class="b" style="left:295.33px;top:1143.60px;" width="15.80" height="18.60" viewBox="0 0 15.8 18.6"><path d="M4.4 0.9 H11.4 M5.7 1 V7 L1.2 15.4 a1.5 1.5 0 0 0 1.3 2.3 H13.3 a1.5 1.5 0 0 0 1.3 -2.3 L10.1 7 V1" stroke="#9099ad" stroke-width="1.7" fill="none" stroke-linejoin="round" stroke-linecap="round"/><path d="M4 11.2 H11.8 L14 15.6 a1.2 1.2 0 0 1 -1 1.7 H2.8 a1.2 1.2 0 0 1 -1 -1.7 Z" fill="#dfe3ea"/></svg>
<div class="b" style="left:157.00px;top:1185.25px;width:407.60px;height:89.80px;background:#2f3747;border:2px solid #535d71;border-radius:10.5px;box-shadow:0 2px 5px rgba(0,0,0,.5),0 0 2px rgba(0,0,0,.3);"></div>
<div class="t" style="left:169.55px;top:1202.98px;font-size:21.7px;line-height:21.7px;color:#f4f6fa;font-weight:700;letter-spacing:-0.017px;">RUN0000080</div>
<div class="b" style="left:452.20px;top:1197.85px;width:99.80px;height:31.20px;background:#44565c;border-radius:3.5px;"></div>
<div class="t" style="left:463.65px;top:1205.15px;font-size:18.9px;line-height:18.9px;color:#9fdcae;letter-spacing:0.196px;">Resulted</div>
<div class="t" style="left:169.74px;top:1240.25px;font-size:18.9px;line-height:18.9px;color:#f4f6fa;font-weight:700;letter-spacing:-0.316px;">MPS2</div>
<div class="t" style="left:375.60px;top:1240.25px;font-size:18.9px;line-height:18.9px;color:#eef1f6;letter-spacing:0.059px;">2/16/2023, 12:31 PM</div>
<svg class="b" style="left:290.13px;top:1239.05px;" width="15.80" height="18.60" viewBox="0 0 15.8 18.6"><path d="M4.4 0.9 H11.4 M5.7 1 V7 L1.2 15.4 a1.5 1.5 0 0 0 1.3 2.3 H13.3 a1.5 1.5 0 0 0 1.3 -2.3 L10.1 7 V1" stroke="#9099ad" stroke-width="1.7" fill="none" stroke-linejoin="round" stroke-linecap="round"/><path d="M4 11.2 H11.8 L14 15.6 a1.2 1.2 0 0 1 -1 1.7 H2.8 a1.2 1.2 0 0 1 -1 -1.7 Z" fill="#dfe3ea"/></svg>
<div class="b" style="left:157.00px;top:1280.70px;width:407.60px;height:89.80px;background:#2f3747;border:2px solid #535d71;border-radius:10.5px;box-shadow:0 2px 5px rgba(0,0,0,.5),0 0 2px rgba(0,0,0,.3);"></div>
<div class="t" style="left:169.55px;top:1298.43px;font-size:21.7px;line-height:21.7px;color:#f4f6fa;font-weight:700;letter-spacing:-0.027px;">RUN0000079</div>
<div class="b" style="left:392.90px;top:1293.30px;width:159.10px;height:31.20px;background:#4a4b50;border-radius:3.5px;"></div>
<div class="t" style="left:404.35px;top:1300.60px;font-size:18.9px;line-height:18.9px;color:#efc97f;letter-spacing:0.329px;">Run Completed</div>
<div class="t" style="left:169.74px;top:1335.70px;font-size:18.9px;line-height:18.9px;color:#f4f6fa;font-weight:700;letter-spacing:-0.316px;">MPS2</div>
<div class="t" style="left:375.60px;top:1335.70px;font-size:18.9px;line-height:18.9px;color:#eef1f6;letter-spacing:0.059px;">2/16/2023, 12:09 PM</div>
<svg class="b" style="left:290.13px;top:1334.50px;" width="15.80" height="18.60" viewBox="0 0 15.8 18.6"><path d="M4.4 0.9 H11.4 M5.7 1 V7 L1.2 15.4 a1.5 1.5 0 0 0 1.3 2.3 H13.3 a1.5 1.5 0 0 0 1.3 -2.3 L10.1 7 V1" stroke="#9099ad" stroke-width="1.7" fill="none" stroke-linejoin="round" stroke-linecap="round"/><path d="M4 11.2 H11.8 L14 15.6 a1.2 1.2 0 0 1 -1 1.7 H2.8 a1.2 1.2 0 0 1 -1 -1.7 Z" fill="#dfe3ea"/></svg>
<div class="b" style="left:157.00px;top:1376.15px;width:407.60px;height:89.80px;background:#2f3747;border:2px solid #535d71;border-radius:10.5px;box-shadow:0 2px 5px rgba(0,0,0,.5),0 0 2px rgba(0,0,0,.3);"></div>
<div class="t" style="left:169.55px;top:1393.88px;font-size:21.7px;line-height:21.7px;color:#f4f6fa;font-weight:700;letter-spacing:-0.042px;">RUN0000078</div>
<div class="b" style="left:392.90px;top:1388.75px;width:159.10px;height:31.20px;background:#4a4b50;border-radius:3.5px;"></div>
<div class="t" style="left:404.35px;top:1396.05px;font-size:18.9px;line-height:18.9px;color:#efc97f;letter-spacing:0.329px;">Run Completed</div>
<div class="t" style="left:169.74px;top:1431.15px;font-size:18.9px;line-height:18.9px;color:#f4f6fa;font-weight:700;letter-spacing:-0.316px;">MPS2</div>
<div class="t" style="left:375.60px;top:1431.15px;font-size:18.9px;line-height:18.9px;color:#eef1f6;letter-spacing:0.059px;">2/16/2023, 12:07 PM</div>
<svg class="b" style="left:290.13px;top:1429.95px;" width="15.80" height="18.60" viewBox="0 0 15.8 18.6"><path d="M4.4 0.9 H11.4 M5.7 1 V7 L1.2 15.4 a1.5 1.5 0 0 0 1.3 2.3 H13.3 a1.5 1.5 0 0 0 1.3 -2.3 L10.1 7 V1" stroke="#9099ad" stroke-width="1.7" fill="none" stroke-linejoin="round" stroke-linecap="round"/><path d="M4 11.2 H11.8 L14 15.6 a1.2 1.2 0 0 1 -1 1.7 H2.8 a1.2 1.2 0 0 1 -1 -1.7 Z" fill="#dfe3ea"/></svg>
<div class="b" style="left:157.00px;top:1471.60px;width:407.60px;height:89.80px;background:#2f3747;border:2px solid #535d71;border-radius:10.5px;box-shadow:0 2px 5px rgba(0,0,0,.5),0 0 2px rgba(0,0,0,.3);"></div>
<div class="t" style="left:169.55px;top:1489.33px;font-size:21.7px;line-height:21.7px;color:#f4f6fa;font-weight:700;letter-spacing:-0.010px;">RUN0000077</div>
<div class="b" style="left:452.20px;top:1484.20px;width:99.80px;height:31.20px;background:#44565c;border-radius:3.5px;"></div>
<div class="t" style="left:463.65px;top:1491.50px;font-size:18.9px;line-height:18.9px;color:#9fdcae;letter-spacing:0.196px;">Resulted</div>
<div class="t" style="left:169.74px;top:1526.60px;font-size:18.9px;line-height:18.9px;color:#f4f6fa;font-weight:700;letter-spacing:-0.316px;">MPS2</div>
<div class="t" style="left:375.60px;top:1526.60px;font-size:18.9px;line-height:18.9px;color:#eef1f6;letter-spacing:0.059px;">2/16/2023, 12:05 PM</div>
<svg class="b" style="left:290.13px;top:1525.40px;" width="15.80" height="18.60" viewBox="0 0 15.8 18.6"><path d="M4.4 0.9 H11.4 M5.7 1 V7 L1.2 15.4 a1.5 1.5 0 0 0 1.3 2.3 H13.3 a1.5 1.5 0 0 0 1.3 -2.3 L10.1 7 V1" stroke="#9099ad" stroke-width="1.7" fill="none" stroke-linejoin="round" stroke-linecap="round"/><path d="M4 11.2 H11.8 L14 15.6 a1.2 1.2 0 0 1 -1 1.7 H2.8 a1.2 1.2 0 0 1 -1 -1.7 Z" fill="#dfe3ea"/></svg>
</div></div>
<div class="b" style="left:152.00px;top:1493.70px;width:418.00px;height:27.00px;background:#33466a;"></div>
<div class="t" style="left:595.23px;top:191.97px;font-size:25.2px;line-height:25.2px;color:#e0e4eb;letter-spacing:0.317px;">Results for RUN0000091</div>
<div class="b" style="left:892.30px;top:191.00px;width:31.50px;height:30.80px;background:#3b4454;border-radius:7px;"></div>
<svg class="b" style="left:899.60px;top:197.40px;" width="17.40" height="18.40" viewBox="0 0 17.4 18.4"><g fill="none" stroke="#959eaf" stroke-width="1.25" stroke-linejoin="round"><path d="M6.6 5.2 V2 a1.1 1.1 0 0 1 1.1 -1.1 H12.6 L16.4 4.7 V12.2 a1.1 1.1 0 0 1 -1.1 1.1 H7.7 a1.1 1.1 0 0 1 -1.1 -1.1 Z"/><path d="M12.6 0.9 V4.7 H16.4"/><path d="M6.6 5.2 H2.1 a1.1 1.1 0 0 0 -1.1 1.1 V16.4 a1.1 1.1 0 0 0 1.1 1.1 H9.4 a1.1 1.1 0 0 0 1.1 -1.1 V13.3"/></g></svg>
<svg class="b" style="left:596.00px;top:238.90px;" width="21.60" height="21.40" viewBox="0 0 21.6 21.4"><path d="M6 3.4 a3 3 0 0 1 6 0 V12 L9 14.8 L6 12 Z" fill="#d3d8e1"/><rect x="4" y="16" width="9.4" height="1" fill="#8992a3"/><path d="M12 6.4 C17.4 6.6 20 10.4 19.9 14.6 V19" stroke="#d3d8e1" stroke-width="2.9" fill="none"/><rect x="0.2" y="18" width="21.2" height="3.1" rx="1.5" fill="#d3d8e1"/></svg>
<div class="t" style="left:626.63px;top:239.62px;font-size:21.6px;line-height:21.6px;color:#d3d8e1;letter-spacing:-0.788px;">MPS2</div>
<svg class="b" style="left:713.80px;top:239.00px;" width="18.40" height="20.80" viewBox="0 0 18.4 20.8"><rect x="3.6" y="0" width="2.8" height="5" rx="1.2" fill="#d3d8e1"/><rect x="12" y="0" width="2.8" height="5" rx="1.2" fill="#d3d8e1"/><path d="M2.4 2.4 H16 a2.4 2.4 0 0 1 2.4 2.4 V7.2 H0 V4.8 a2.4 2.4 0 0 1 2.4 -2.4 Z" fill="#d3d8e1"/><path d="M0 8.4 H18.4 V18.4 a2.4 2.4 0 0 1 -2.4 2.4 H2.4 a2.4 2.4 0 0 1 -2.4 -2.4 Z" fill="#6f788a"/><path d="M9.2 11 V18 M5.7 14.5 H12.7" stroke="#d3d8e1" stroke-width="1.6" fill="none"/></svg>
<div class="t" style="left:742.18px;top:239.62px;font-size:21.6px;line-height:21.6px;color:#d3d8e1;letter-spacing:0.191px;">3/23/2023, 6:08 AM</div>
<svg class="b" style="left:2370.50px;top:195.30px;" width="8.00" height="20.00" viewBox="0 0 8 20"><circle cx="4" cy="3.4" r="2.3" fill="#fff"/><circle cx="4" cy="10" r="2.3" fill="#9aa2b2"/><circle cx="4" cy="16.6" r="2.3" fill="#fff"/></svg>
<div class="b" style="left:596.00px;top:291.40px;width:1805.00px;height:1.70px;background:#8c95a6;"></div>
<div class="b" style="left:596.00px;top:318.60px;width:1354.00px;height:826.00px;background:#1c202d;border-radius:9px;box-shadow:0 2px 6px rgba(0,0,0,.42);"></div>
<div class="t" style="left:611.11px;top:339.53px;font-size:21.7px;line-height:21.7px;color:#f4f6fa;font-weight:700;letter-spacing:-0.159px;">Chip #sdasdxgv23</div>
<div class="b" style="left:596.00px;top:376.20px;width:1354.00px;height:1.40px;background:#2b3140;"></div>
<svg class="b" style="left:1913.60px;top:338.60px;" width="20.00" height="23.00" viewBox="0 0 20 23"><path d="M10 0.4 C12.6 2.2 15.6 3 19.4 3.2 V10.4 C19.4 16.4 15.4 20.4 10 22.6 C4.6 20.4 0.6 16.4 0.6 10.4 V3.2 C4.4 3 7.4 2.2 10 0.4 Z" fill="#386e52"/><path d="M5.8 11.4 L8.8 14.4 L14.4 8.4" stroke="#72d49b" stroke-width="1.7" fill="none"/></svg>
<div class="t" style="left:652.91px;top:414.90px;font-size:18.9px;line-height:18.9px;color:#f4f6fa;font-weight:700;">1</div>
<div class="t" style="left:760.60px;top:414.90px;font-size:18.9px;line-height:18.9px;color:#f4f6fa;font-weight:700;">2</div>
<div class="t" style="left:867.99px;top:414.90px;font-size:18.9px;line-height:18.9px;color:#f4f6fa;font-weight:700;">3</div>
<div class="t" style="left:975.29px;top:414.90px;font-size:18.9px;line-height:18.9px;color:#f4f6fa;font-weight:700;">4</div>
<div class="t" style="left:1082.16px;top:414.90px;font-size:18.9px;line-height:18.9px;color:#f4f6fa;font-weight:700;">5</div>
<div class="t" style="left:1189.21px;top:414.90px;font-size:18.9px;line-height:18.9px;color:#f4f6fa;font-weight:700;">6</div>
<div class="t" style="left:1296.25px;top:414.90px;font-size:18.9px;line-height:18.9px;color:#f4f6fa;font-weight:700;">7</div>
<div class="t" style="left:1403.62px;top:414.90px;font-size:18.9px;line-height:18.9px;color:#f4f6fa;font-weight:700;">8</div>
<div class="t" style="left:1510.72px;top:414.90px;font-size:18.9px;line-height:18.9px;color:#f4f6fa;font-weight:700;">9</div>
<div class="t" style="left:1617.35px;top:414.90px;font-size:18.9px;line-height:18.9px;color:#f4f6fa;font-weight:700;">10</div>
<div class="t" style="left:1724.51px;top:414.90px;font-size:18.9px;line-height:18.9px;color:#f4f6fa;font-weight:700;">11</div>
<div class="t" style="left:1831.67px;top:414.90px;font-size:18.9px;line-height:18.9px;color:#f4f6fa;font-weight:700;">12</div>
<div class="t" style="left:617.59px;top:460.20px;font-size:18.9px;line-height:18.9px;color:#f4f6fa;font-weight:700;">A</div>
<div class="t" style="left:617.37px;top:499.50px;font-size:18.9px;line-height:18.9px;color:#f4f6fa;font-weight:700;">B</div>
<div class="t" style="left:617.45px;top:539.00px;font-size:18.9px;line-height:18.9px;color:#f4f6fa;font-weight:700;">C</div>
<div class="t" style="left:617.34px;top:578.00px;font-size:18.9px;line-height:18.9px;color:#f4f6fa;font-weight:700;">D</div>
<svg class="b" style="left:646.30px;top:444.70px;" width="1289.92" height="169.60" viewBox="0 0 1289.92 169.60"><rect x="1.32" y="1.32" width="1.35" height="166.95" fill="#fff"/><rect x="108.48" y="1.32" width="1.35" height="166.95" fill="#fff"/><rect x="215.64" y="1.32" width="1.35" height="166.95" fill="#fff"/><rect x="322.81" y="1.32" width="1.35" height="166.95" fill="#fff"/><rect x="429.96" y="1.32" width="1.35" height="166.95" fill="#fff"/><rect x="537.12" y="1.32" width="1.35" height="166.95" fill="#fff"/><rect x="644.29" y="1.32" width="1.35" height="166.95" fill="#fff"/><rect x="751.45" y="1.32" width="1.35" height="166.95" fill="#fff"/><rect x="858.61" y="1.32" width="1.35" height="166.95" fill="#fff"/><rect x="965.76" y="1.32" width="1.35" height="166.95" fill="#fff"/><rect x="1072.92" y="1.32" width="1.35" height="166.95" fill="#fff"/><rect x="1180.09" y="1.32" width="1.35" height="166.95" fill="#fff"/><rect x="1287.25" y="1.32" width="1.35" height="166.95" fill="#fff"/><rect x="1.32" y="1.32" width="1287.27" height="1.35" fill="#fff"/><rect x="1.32" y="41.33" width="1287.27" height="1.35" fill="#fff"/><rect x="1.32" y="83.13" width="1287.27" height="1.35" fill="#fff"/><rect x="1.32" y="124.83" width="1287.27" height="1.35" fill="#fff"/><rect x="1.32" y="166.92" width="1287.27" height="1.35" fill="#fff"/></svg>
<div class="t" style="left:653.36px;top:458.80px;font-size:16.3px;line-height:16.3px;color:#eef1f6;letter-spacing:-1.801px;">REF_POS</div>
<svg class="b" style="left:731.46px;top:463.20px;" width="21.00" height="20.20" viewBox="0 0 21 20.2"><path d="M21 0 V20.2 H0 Z" fill="#a4abba"/></svg>
<div class="t" style="left:760.52px;top:458.80px;font-size:16.3px;line-height:16.3px;color:#eef1f6;letter-spacing:-0.978px;">NTC1</div>
<svg class="b" style="left:838.62px;top:463.20px;" width="21.00" height="20.20" viewBox="0 0 21 20.2"><path d="M21 0 V20.2 H0 Z" fill="#a4abba"/></svg>
<div class="t" style="left:868.19px;top:458.80px;font-size:16.3px;line-height:16.3px;color:#eef1f6;letter-spacing:-1.420px;">CAL</div>
<svg class="b" style="left:945.78px;top:463.20px;" width="21.00" height="20.20" viewBox="0 0 21 20.2"><path d="M21 0 V20.2 H0 Z" fill="#a4abba"/></svg>
<div class="t" style="left:974.84px;top:458.80px;font-size:16.3px;line-height:16.3px;color:#eef1f6;letter-spacing:-1.639px;">REF_NEG</div>
<svg class="b" style="left:1052.94px;top:463.20px;" width="21.00" height="20.20" viewBox="0 0 21 20.2"><path d="M21 0 V20.2 H0 Z" fill="#a4abba"/></svg>
<div class="t" style="left:1082.60px;top:458.80px;font-size:16.3px;line-height:16.3px;color:#eef1f6;letter-spacing:-0.359px;">S0000494</div>
<svg class="b" style="left:1160.10px;top:463.20px;" width="21.00" height="20.20" viewBox="0 0 21 20.2"><path d="M21 0 V20.2 H0 Z" fill="#d94b3e"/></svg>
<div class="t" style="left:1617.80px;top:500.30px;font-size:16.3px;line-height:16.3px;color:#eef1f6;letter-spacing:-0.970px;">NTC2</div>
<svg class="b" style="left:1695.90px;top:505.00px;" width="21.00" height="20.20" viewBox="0 0 21 20.2"><path d="M21 0 V20.2 H0 Z" fill="#a4abba"/></svg>
<div class="t" style="left:1189.16px;top:542.10px;font-size:16.3px;line-height:16.3px;color:#eef1f6;letter-spacing:-1.004px;">NTC3</div>
<svg class="b" style="left:1267.26px;top:546.70px;" width="21.00" height="20.20" viewBox="0 0 21 20.2"><path d="M21 0 V20.2 H0 Z" fill="#a4abba"/></svg>
<div class="t" style="left:760.52px;top:583.80px;font-size:16.3px;line-height:16.3px;color:#eef1f6;letter-spacing:-1.084px;">NTC4</div>
<svg class="b" style="left:838.62px;top:588.80px;" width="21.00" height="20.20" viewBox="0 0 21 20.2"><path d="M21 0 V20.2 H0 Z" fill="#a4abba"/></svg>
<div class="b" style="left:927.70px;top:644.80px;width:13.20px;height:13.20px;background:#4f9d69;"></div>
<div class="t" style="left:949.88px;top:642.97px;font-size:16.1px;line-height:16.1px;color:#eef1f6;letter-spacing:0.325px;">Report Generated</div>
<div class="b" style="left:1093.00px;top:644.80px;width:13.20px;height:13.20px;background:#6fd0c0;"></div>
<div class="t" style="left:1115.68px;top:642.97px;font-size:16.1px;line-height:16.1px;color:#eef1f6;letter-spacing:0.301px;">Result Approved</div>
<div class="b" style="left:1248.20px;top:644.80px;width:13.20px;height:13.20px;background:#d9a441;"></div>
<div class="t" style="left:1271.57px;top:642.97px;font-size:16.1px;line-height:16.1px;color:#eef1f6;letter-spacing:-0.249px;">Sample Re-Racked</div>
<div class="b" style="left:1417.30px;top:644.80px;width:13.20px;height:13.20px;background:#e0524a;"></div>
<div class="t" style="left:1439.68px;top:642.97px;font-size:16.1px;line-height:16.1px;color:#eef1f6;letter-spacing:0.463px;">Report Invalid</div>
<div class="b" style="left:1555.00px;top:644.80px;width:13.20px;height:13.20px;background:#7e5bd6;"></div>
<div class="t" style="left:1577.68px;top:642.97px;font-size:16.1px;line-height:16.1px;color:#eef1f6;letter-spacing:0.047px;">Pending QC</div>
<div class="b" style="left:1676.40px;top:644.80px;width:13.20px;height:13.20px;background:#3f7fd2;"></div>
<div class="t" style="left:1699.18px;top:642.97px;font-size:16.1px;line-height:16.1px;color:#eef1f6;letter-spacing:0.393px;">Pending Reporting</div>
<div class="b" style="left:1849.00px;top:644.80px;width:13.20px;height:13.20px;background:#a3aab8;"></div>
<div class="t" style="left:1871.68px;top:642.97px;font-size:16.1px;line-height:16.1px;color:#eef1f6;letter-spacing:0.450px;">Controls</div>
<div class="b" style="left:612.20px;top:688.70px;width:1322.30px;height:1.30px;background:#2b3140;"></div>
<svg class="b" style="left:632.80px;top:707.00px;" width="18.80" height="18.80" viewBox="0 0 18.8 18.8"><rect x="0.0" y="0.0" width="5.2" height="5.2" rx="1.2" fill="#fff"/><rect x="6.8" y="0.0" width="5.2" height="5.2" rx="1.2" fill="#8c93a3"/><rect x="13.6" y="0.0" width="5.2" height="5.2" rx="1.2" fill="#fff"/><rect x="0.0" y="6.8" width="5.2" height="5.2" rx="1.2" fill="#8c93a3"/><rect x="6.8" y="6.8" width="5.2" height="5.2" rx="1.2" fill="#fff"/><rect x="13.6" y="6.8" width="5.2" height="5.2" rx="1.2" fill="#8c93a3"/><rect x="0.0" y="13.6" width="5.2" height="5.2" rx="1.2" fill="#fff"/><rect x="6.8" y="13.6" width="5.2" height="5.2" rx="1.2" fill="#8c93a3"/><rect x="13.6" y="13.6" width="5.2" height="5.2" rx="1.2" fill="#fff"/></svg>
<div class="t" style="left:671.22px;top:706.13px;font-size:21.7px;line-height:21.7px;color:#f4f6fa;letter-spacing:0.244px;">Hide Chip Image</div>
<svg class="b" style="left:1893.60px;top:711.40px;" width="13.60" height="9.00" viewBox="0 0 13.6 9"><path d="M1.2 7.8 L6.8 2 L12.4 7.8" stroke="#fff" stroke-width="2" fill="none"/></svg>
<div class="b" style="left:612.20px;top:1126.60px;width:1322.30px;height:1.30px;background:#2b3140;"></div>
<div class="b" style="left:632.80px;top:752.60px;width:834.50px;height:352.70px;background:#070707;border-top:3.2px solid #fff;border-right:2px solid #fff;background:linear-gradient(100deg,#050505 0%,#0a0a0a 45%,#0b0b0b 70%,#050505 100%);"></div>
<svg class="b" style="left:632.80px;top:752.60px;" width="834.50" height="352.70" viewBox="0 0 834.50 352.70"><defs><radialGradient id="dg"><stop offset="0" stop-color="#b2b2b2"/><stop offset="0.5" stop-color="#a2a2a2"/><stop offset="0.78" stop-color="#7a7a7a" stop-opacity="0.55"/><stop offset="1" stop-color="#5a5a5a" stop-opacity="0"/></radialGradient><radialGradient id="dg2"><stop offset="0" stop-color="#ffffff"/><stop offset="0.55" stop-color="#ececec"/><stop offset="0.8" stop-color="#aaaaaa" stop-opacity="0.6"/><stop offset="1" stop-color="#909090" stop-opacity="0"/></radialGradient><linearGradient id="fade" x1="0" y1="0" x2="0" y2="1"><stop offset="0" stop-color="#000" stop-opacity="0"/><stop offset="0.7" stop-color="#000" stop-opacity="0.05"/><stop offset="1" stop-color="#000" stop-opacity="0.3"/></linearGradient><pattern id="blk" x="78.40" y="55.60" width="52.4" height="52.9" patternUnits="userSpaceOnUse"><circle cx="3.00" cy="3.00" r="3.35" fill="url(#dg)"/><circle cx="8.86" cy="3.00" r="3.35" fill="url(#dg)"/><circle cx="14.72" cy="3.00" r="3.35" fill="url(#dg)"/><circle cx="20.58" cy="3.00" r="3.35" fill="url(#dg)"/><circle cx="26.44" cy="3.00" r="3.35" fill="url(#dg)"/><circle cx="32.30" cy="3.00" r="3.35" fill="url(#dg)"/><circle cx="38.16" cy="3.00" r="3.35" fill="url(#dg)"/><circle cx="44.02" cy="3.00" r="3.35" fill="url(#dg)"/><circle cx="3.00" cy="8.86" r="3.35" fill="url(#dg)"/><circle cx="8.86" cy="8.86" r="3.35" fill="url(#dg)"/><circle cx="14.72" cy="8.86" r="3.35" fill="url(#dg)"/><circle cx="20.58" cy="8.86" r="3.35" fill="url(#dg)"/><circle cx="26.44" cy="8.86" r="3.35" fill="url(#dg)"/><circle cx="32.30" cy="8.86" r="3.35" fill="url(#dg)"/><circle cx="38.16" cy="8.86" r="3.35" fill="url(#dg)"/><circle cx="44.02" cy="8.86" r="3.35" fill="url(#dg)"/><circle cx="3.00" cy="14.72" r="3.35" fill="url(#dg)"/><circle cx="8.86" cy="14.72" r="3.35" fill="url(#dg)"/><circle cx="14.72" cy="14.72" r="3.35" fill="url(#dg)"/><circle cx="20.58" cy="14.72" r="3.35" fill="url(#dg)"/><circle cx="26.44" cy="14.72" r="3.35" fill="url(#dg)"/><circle cx="32.30" cy="14.72" r="3.35" fill="url(#dg)"/><circle cx="38.16" cy="14.72" r="3.35" fill="url(#dg)"/><circle cx="44.02" cy="14.72" r="3.35" fill="url(#dg)"/><circle cx="3.00" cy="20.58" r="3.35" fill="url(#dg)"/><circle cx="8.86" cy="20.58" r="3.35" fill="url(#dg)"/><circle cx="14.72" cy="20.58" r="3.35" fill="url(#dg)"/><circle cx="20.58" cy="20.58" r="3.35" fill="url(#dg)"/><circle cx="26.44" cy="20.58" r="3.35" fill="url(#dg)"/><circle cx="32.30" cy="20.58" r="3.35" fill="url(#dg)"/><circle cx="38.16" cy="20.58" r="3.35" fill="url(#dg)"/><circle cx="44.02" cy="20.58" r="3.35" fill="url(#dg)"/><circle cx="3.00" cy="26.44" r="3.35" fill="url(#dg)"/><circle cx="8.86" cy="26.44" r="3.35" fill="url(#dg)"/><circle cx="14.72" cy="26.44" r="3.35" fill="url(#dg)"/><circle cx="20.58" cy="26.44" r="3.35" fill="url(#dg)"/><circle cx="26.44" cy="26.44" r="3.35" fill="url(#dg)"/><circle cx="32.30" cy="26.44" r="3.35" fill="url(#dg)"/><circle cx="38.16" cy="26.44" r="3.35" fill="url(#dg)"/><circle cx="44.02" cy="26.44" r="3.35" fill="url(#dg)"/><circle cx="3.00" cy="32.30" r="3.35" fill="url(#dg)"/><circle cx="8.86" cy="32.30" r="3.35" fill="url(#dg)"/><circle cx="14.72" cy="32.30" r="3.35" fill="url(#dg)"/><circle cx="20.58" cy="32.30" r="3.35" fill="url(#dg)"/><circle cx="26.44" cy="32.30" r="3.35" fill="url(#dg)"/><circle cx="32.30" cy="32.30" r="3.35" fill="url(#dg)"/><circle cx="38.16" cy="32.30" r="3.35" fill="url(#dg)"/><circle cx="44.02" cy="32.30" r="3.35" fill="url(#dg)"/><circle cx="3.00" cy="38.16" r="3.35" fill="url(#dg)"/><circle cx="8.86" cy="38.16" r="3.35" fill="url(#dg)"/><circle cx="14.72" cy="38.16" r="3.35" fill="url(#dg)"/><circle cx="20.58" cy="38.16" r="3.35" fill="url(#dg)"/><circle cx="26.44" cy="38.16" r="3.35" fill="url(#dg)"/><circle cx="32.30" cy="38.16" r="3.35" fill="url(#dg)"/><circle cx="38.16" cy="38.16" r="3.35" fill="url(#dg)"/><circle cx="44.02" cy="38.16" r="3.35" fill="url(#dg)"/><circle cx="3.00" cy="44.02" r="3.35" fill="url(#dg2)"/><circle cx="8.86" cy="44.02" r="3.35" fill="url(#dg2)"/><circle cx="14.72" cy="44.02" r="3.35" fill="url(#dg)"/><circle cx="20.58" cy="44.02" r="3.35" fill="url(#dg)"/><circle cx="26.44" cy="44.02" r="3.35" fill="url(#dg)"/><circle cx="32.30" cy="44.02" r="3.35" fill="url(#dg)"/><circle cx="38.16" cy="44.02" r="3.35" fill="url(#dg)"/><circle cx="44.02" cy="44.02" r="3.35" fill="url(#dg)"/></pattern></defs><rect x="78.40" y="55.60" width="624.80" height="207.60" fill="url(#blk)"/><rect x="78.40" y="55.60" width="624.80" height="207.60" fill="url(#fade)"/><path d="M79.2 52.7 L689.2 45.0 C705.2 45.0 707.2 53.4 707.2 69.4 V87.4 C707.2 97.4 710.2 100.4 714.2 102.4" stroke="#222222" stroke-width="1.4" fill="none" stroke-dasharray="3.6 2.26"/><path d="M714.2 205.4 C709.2 209.4 708.2 215.4 708.2 223.4 V249.4 C708.2 259.4 703.2 264.4 689.2 264.4 H79.2" stroke="#1c1c1c" stroke-width="1.3" fill="none" stroke-dasharray="3.6 2.26"/></svg>
</div></div>
</body></html>
